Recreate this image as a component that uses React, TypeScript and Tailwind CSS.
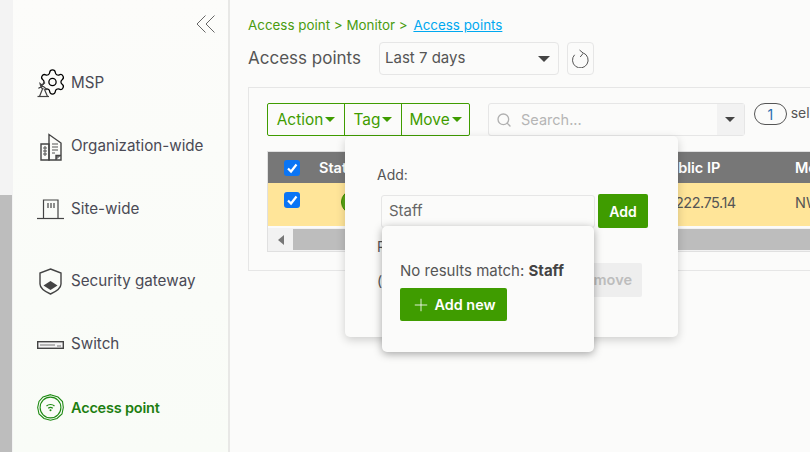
import { Search, Settings, Plus } from 'lucide-react'

const font = "font-['Inter','Liberation_Sans',sans-serif]"

function MspIcon() {
  return (
    <svg width="27" height="27" viewBox="0 0 27 27" fill="none" stroke="#444" strokeWidth="1.2" className="overflow-visible">
      <Settings x="1" y="-2.5" size={29} strokeWidth={1.05} className="overflow-visible" />
      <path d="M1.5 18.5 L8 12.5 M3 13.5 C3.5 18 6 20 10 19.5 L3 13.5 Z" fill="#fcfcfa" />
      <path d="M5.5 19 L2.5 26.5 H10.5 L7.5 19.5" fill="#fcfcfa" />
      <path d="M0.5 26.5 H12" />
    </svg>
  )
}

function OrgIcon() {
  return (
    <svg width="22" height="28" viewBox="0 0 22 28" fill="none" stroke="#444" strokeWidth="1.4">
      <path d="M1 27 V11 H9 V27 Z" />
      <path d="M9 27 V1.5 L21 10 V27 Z" />
      <path d="M16 27 V22.5 H21" fill="#777" />
      <path d="M3 15 h4 M3 18 h4 M3 21 h4 M5 13 v10 M12 11 h6 M12 14 h6 M12 17 h6 M12 20 h3" stroke="#555" strokeWidth="1.1" />
    </svg>
  )
}

function SiteIcon() {
  return (
    <svg width="27" height="21" viewBox="0 0 27 21" fill="none" stroke="#444" strokeWidth="1.2">
      <path d="M0 19.5 H27" />
      <path d="M6.5 19.5 V1 H21 V19.5" />
      <path d="M11 4 V9 M14 4 V9 M17 4 V9" />
    </svg>
  )
}

function ShieldIcon() {
  return (
    <svg width="23" height="27" viewBox="0 0 23 27" fill="none" stroke="#444" strokeWidth="1.4">
      <path d="M11.5 1 L22 5 V16 C22 21 16 24 11.5 26 C7 24 1 21 1 16 V5 Z" />
      <path d="M4.5 17.5 L11.5 13 L18.5 17.5 L11.5 22 Z" fill="#444" stroke="none" />
    </svg>
  )
}

function SwitchIcon() {
  return (
    <svg width="27" height="8" viewBox="0 0 27 8" fill="none">
      <rect x="0.7" y="0.7" width="25.6" height="6.6" fill="#f4f4f4" stroke="#444" strokeWidth="1.4" />
      <path d="M3 4 H18 M20 5 H24" stroke="#777" strokeWidth="1.2" />
    </svg>
  )
}

function ApIcon() {
  return (
    <svg width="27" height="27" viewBox="0 0 27 27" fill="none" stroke="#1d8a12">
      <path d="M13.5 0.7 L21 3 L25.5 7.5 L26.3 13.5 L25 20 L20 24.5 L13.5 26.3 L7 24.5 L2 20 L0.7 13.5 L2 7.5 L6 3 Z" strokeWidth="1.1" />
      <circle cx="13.5" cy="13.5" r="10.4" strokeWidth="1.1" />
      <path d="M9.5 12 C11.7 10 15.3 10 17.5 12 M11.2 14.2 C12.5 13.2 14.5 13.2 15.8 14.2" strokeWidth="1.2" />
      <circle cx="13.5" cy="16.3" r="1" fill="#1d8a12" stroke="none" />
    </svg>
  )
}

function CollapseIcon() {
  return (
    <svg width="19" height="18" viewBox="0 0 19 18" fill="none" stroke="#666" strokeWidth="1">
      <path d="M9.5 0.5 L1 9 L9.5 17.5 M18.5 0.5 L10 9 L18.5 17.5" />
    </svg>
  )
}

function RefreshIcon() {
  return (
    <svg width="18" height="19" viewBox="0 0 18 19" fill="none" stroke="#555" strokeWidth="1">
      <path d="M2.6 5.8 A7.8 7.8 0 1 0 11.5 4" />
      <path d="M7.5 1 L11.3 4.2 L8.2 8" />
    </svg>
  )
}

function NavItem({ icon, label, active, className }: { icon: React.ReactNode; label: string; active?: boolean; className?: string }) {
  return (
    <div className={`flex items-center h-[63px] ${className ?? ''}`}>
      <div className="w-[27px] flex justify-center items-center shrink-0">{icon}</div>
      <span className={`ml-[7px] ${active ? 'text-[14.5px] font-semibold tracking-[-0.2px] text-[#1d7f10]' : 'text-[15.2px] text-[#4a4a55]'}`}>{label}</span>
    </div>
  )
}

function Sidebar() {
  return (
    <aside className="w-[217px] h-full shrink-0 border-r-2 border-[#e8e8e6] bg-gradient-to-b from-[#fcfcfa] to-[#f9fcf7] pl-[24px]">
      <div className="flex justify-end pr-[13px] pt-[15px] h-[52px]">
        <CollapseIcon />
      </div>
      <NavItem icon={<MspIcon />} label="MSP" />
      <NavItem icon={<OrgIcon />} label="Organization-wide" />
      <NavItem icon={<SiteIcon />} label="Site-wide" />
      <NavItem icon={<ShieldIcon />} label="Security gateway" className="mt-[9px]" />
      <NavItem icon={<SwitchIcon />} label="Switch" />
      <NavItem icon={<ApIcon />} label="Access point" active />
    </aside>
  )
}

function Check() {
  return (
    <div className="w-[16px] h-[16px] rounded-[3px] bg-[#0a75f5] flex items-center justify-center shrink-0">
      <svg width="12" height="12" viewBox="0 0 12 12" fill="none" stroke="#fff" strokeWidth="2.2">
        <path d="M2 6.5 L5 9.5 L10.5 2.5" />
      </svg>
    </div>
  )
}

function Caret({ className }: { className?: string }) {
  return <span className={`inline-block w-0 h-0 border-x-[5px] border-x-transparent border-t-[5px] ${className ?? 'border-t-[#3f9c00]'}`} />
}

function TagPopover() {
  return (
    <div className="absolute left-[96px] top-[48px] w-[333px] h-[201px] bg-[#fbfbfa] rounded-[5px] shadow-[0_3px_10px_rgba(0,0,0,0.18)] pl-[32px] pt-[30px] text-[#555]">
      <div className="text-[14px] leading-[18px]">Add:</div>
      <div className="flex mt-[10px] ml-[4px] items-start">
        <div className="w-[214px] h-[33px] mt-[1px] border border-[#e6e6e6] rounded-[3px] px-[7px] text-[15px] leading-[30px] text-[#666]">Staff</div>
        <button className="ml-[3px] w-[50px] h-[34px] bg-[#3f9c00] rounded-[2px] text-white text-[14px] font-semibold">Add</button>
      </div>
      <div className="mt-[10px] text-[14px] leading-[18px]">Remove:</div>
      <div className="flex items-center mt-[7px] h-[34px]">
        <span className="text-[14px]">(</span>
        <button className="ml-auto mr-[36px] w-[88px] h-[34px] bg-[#eeeeee] rounded-[2px] text-[#bdbdbd] text-[14.5px] font-semibold text-right pr-[10px]">Remove</button>
      </div>
      {/* dropdown under the tag input */}
      <div className="absolute left-[37px] top-[90px] w-[212px] h-[126px] bg-[#fbfbfa] rounded-[5px] shadow-[0_2px_8px_rgba(0,0,0,0.35)] pl-[18px] pt-[36px]">
        <div className="text-[15px] leading-[18px] text-[#555] whitespace-nowrap">No results match: <b className="font-bold text-[#444]">Staff</b></div>
        <button className="mt-[8px] w-[107px] h-[33px] bg-[#3f9c00] rounded-[2px] text-white text-[14.4px] font-semibold flex items-center justify-center gap-[3px]">
          <Plus size={20} strokeWidth={1} /> Add new
        </button>
      </div>
    </div>
  )
}

function Card() {
  return (
    <section className="relative mt-[12px] h-[184px] w-[600px] bg-[#fbfbfa] border border-[#e6e6e6] pt-[15px] pl-[18px]">
      <div className="flex items-start">
        <div className="flex h-[33px] w-[204px] border border-[#3f9c00] rounded-[2px] text-[#3f9c00] text-[15.4px]">
          <div className="w-[77px] flex items-center justify-center gap-[2px] border-r border-[#3f9c00]">Action<Caret /></div>
          <div className="w-[57px] flex items-center justify-center gap-[2px] border-r border-[#3f9c00]">Tag<Caret /></div>
          <div className="flex-1 flex items-center justify-center gap-[2px]">Move<Caret /></div>
        </div>
        <div className="ml-[18px] flex h-[33px] w-[258px] border border-[#e6e6e6] rounded-[3px]">
          <div className="flex-1 flex items-center pl-[7px] text-[#b5b5b5] text-[14.5px]">
            <Search size={16} strokeWidth={2} color="#b0b0b0" />
            <span className="ml-[9px]">Search...</span>
          </div>
          <div className="w-[27px] bg-[#f2f2f2] flex items-center justify-center"><Caret className="border-t-[#444]" /></div>
        </div>
        <div className="ml-[9px] w-[33px] h-[22px] border border-[#555] rounded-full flex items-center justify-center text-[14px] text-[#2a6fb0]">1</div>
        <span className="ml-[4px] text-[14px] leading-[20px] text-[#555] whitespace-nowrap">selected</span>
      </div>
      <div className="mt-[15px] w-[580px] border border-[#e0e0e0] text-[14.5px] whitespace-nowrap">
        <div className="flex items-center h-[31px] bg-[#777777] text-white font-semibold">
          <div className="w-[51px] shrink-0 pl-[16px]"><Check /></div>
          <div className="w-[341px] shrink-0">Status</div>
          <div className="w-[135px] shrink-0">Public IP</div>
          <div>Model</div>
        </div>
        <div className="flex items-center h-[43px] bg-[#ffe599] text-[#555]">
          <div className="w-[51px] shrink-0 pl-[16px] -mt-[10px]"><Check /></div>
          <div className="w-[73px] shrink-0 -mt-[6px]"><div className="ml-[22px] w-[24px] h-[24px] rounded-full bg-[#5aa516] border border-[#3f8c00]" /></div>
          <div className="w-[283px] shrink-0" />
          <div className="w-[120px] shrink-0 -mt-[4px] tracking-[-0.5px]">222.75.14</div>
          <div className="-mt-[4px]">NWA</div>
        </div>
        <div className="flex items-center h-[23px] mt-[2px] bg-[#f2f2f2]">
          <div className="w-[25px] flex justify-center">
            <span className="w-0 h-0 border-y-[5px] border-y-transparent border-r-[6px] border-r-[#777]" />
          </div>
          <div className="flex-1 h-[21px] bg-[#bdbdbd]" />
        </div>
      </div>
      <TagPopover />
    </section>
  )
}

export default function App() {
  return (
    <div className={`w-[810px] h-[452px] flex overflow-hidden bg-[#fbfbfa] ${font}`}>
      <div className="w-[13px] h-full shrink-0 flex flex-col bg-[#f3f3f3]">
        <div className="h-[195px]" />
        <div className="flex-1 w-[12px] bg-[#bdbdbd]" />
      </div>
      <Sidebar />
      <main className="flex-1 min-w-0 pl-[18px] pt-[16px]">
        <div className="text-[13.4px] leading-[18px] text-[#4a9b0f] whitespace-nowrap">
          Access point &gt; Monitor &gt; <a className="ml-[2px] text-[#00a8f0] underline">Access points</a>
        </div>
        <div className="flex items-center mt-[8px] h-[33px]">
          <h1 className="w-[131px] text-[17px] font-normal text-[#555] whitespace-nowrap">Access points</h1>
          <div className="w-[180px] h-[33px] border border-[#e6e6e6] rounded-[4px] flex items-center justify-between pl-[5px] pr-[8px] text-[15px] text-[#555]">
            Last 7 days <Caret className="border-t-[#444] !border-x-[6px] !border-t-[6px]" />
          </div>
          <div className="ml-[8px] w-[27px] h-[33px] border border-[#e6e6e6] rounded-[4px] flex items-center justify-center">
            <RefreshIcon />
          </div>
        </div>
        <Card />
      </main>
    </div>
  )
}
